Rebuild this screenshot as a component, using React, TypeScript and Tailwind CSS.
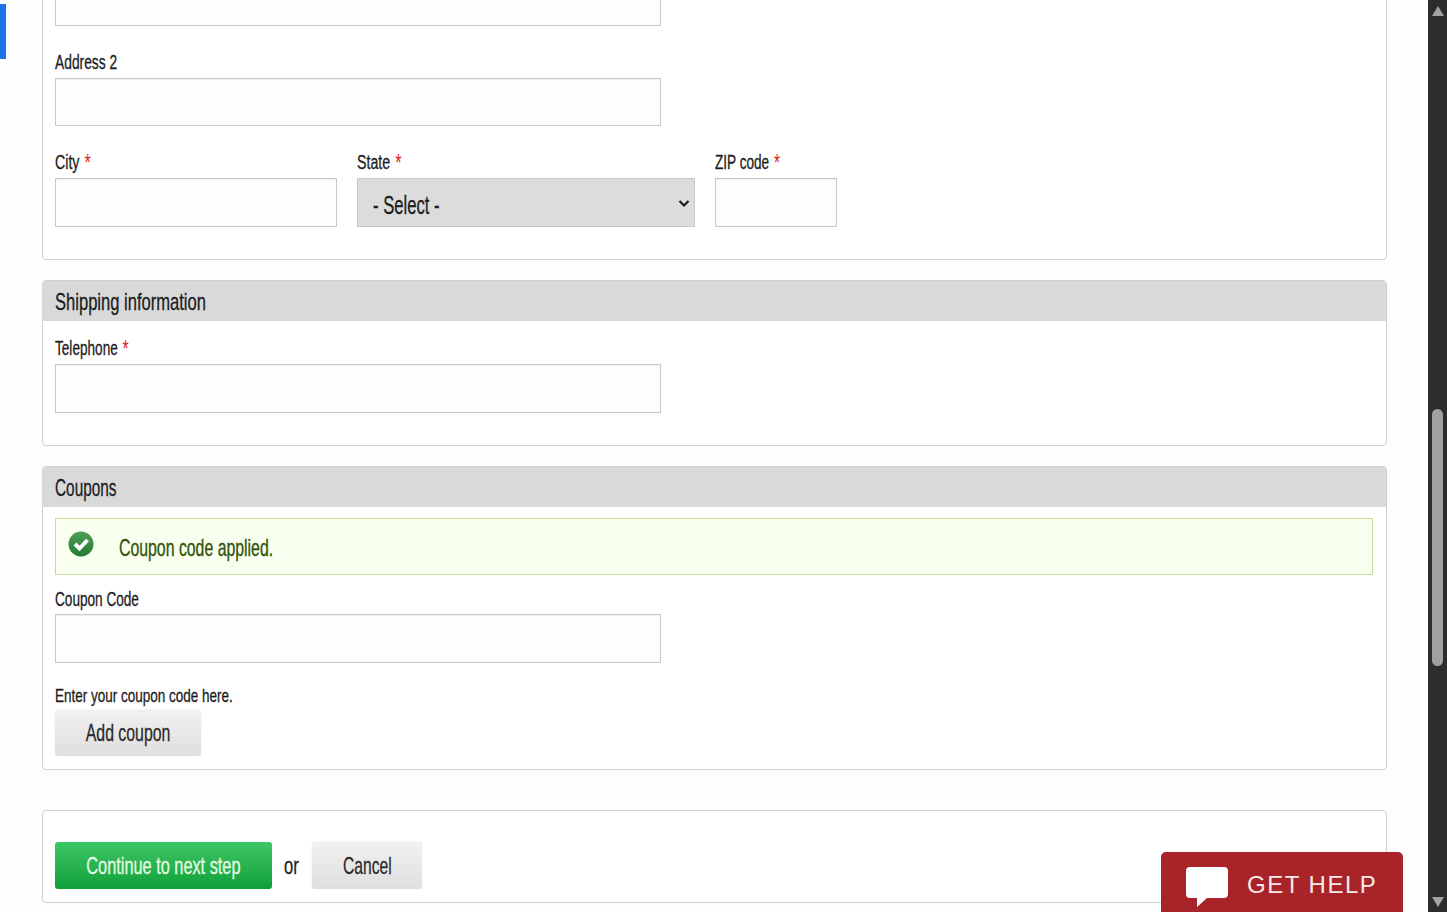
// Oswald is not available: narrow Liberation Sans sideways to get the same condensed look
const narrow = "inline-block whitespace-nowrap [-webkit-text-stroke:0.3px_currentColor]";

function Txt({ children, center, scale = "scale-x-[0.69]" }: { children: React.ReactNode; center?: boolean; scale?: string }) {
  return <span className={narrow + (center ? " origin-center " : " origin-left ") + scale}>{children}</span>;
}

function Req() {
  return <span className="ml-[7px] align-[-2px] text-[23px] leading-none text-[#e0272b] [-webkit-text-stroke:0px]">*</span>;
}

function Label({ children, required, className = "", scale }: { children: React.ReactNode; required?: boolean; className?: string; scale?: string }) {
  return (
    <label className={"block h-[24px] text-[20px] leading-[24px] text-[#1c1c1c] " + className}>
      <Txt scale={scale}>
        {children}
        {required && <Req />}
      </Txt>
    </label>
  );
}

function TextInput({ className = "" }: { className?: string }) {
  return <div className={"border border-[#c8c8c8] bg-[#fdfdfd] shadow-[inset_0_1px_1px_rgba(0,0,0,0.05)] " + className} />;
}

function Card({ title, titleScale, children, className = "" }: { title?: string; titleScale?: string; children: React.ReactNode; className?: string }) {
  return (
    <section className={"rounded-[4px] border border-[#cfcfcf] bg-white " + className}>
      {title && (
        <h2 className="-ml-[1px] h-[40px] rounded-t-[4px] bg-[#d9d9d9] pl-[13px] text-[24px] leading-[41px] text-[#1c1c1c]">
          <Txt scale={titleScale}>{title}</Txt>
        </h2>
      )}
      {children}
    </section>
  );
}

function GreyButton({ children, scale, className = "" }: { children: React.ReactNode; scale: string; className?: string }) {
  return (
    <button className={"flex items-center justify-center rounded-[3px] bg-gradient-to-b from-[#f1f1f1] to-[#dfdfdf] text-[24px] text-[#2b2b2b] shadow-[0_0_1px_rgba(0,0,0,0.25)] " + className}>
      <Txt center scale={scale}>{children}</Txt>
    </button>
  );
}

export default function App() {
  return (
    <div className="relative flex h-[912px] w-full overflow-hidden bg-white" style={{ fontFamily: '"Liberation Sans", sans-serif' }}>
      {/* blue tab on the left edge */}
      <div className="absolute left-0 top-[4px] h-[55px] w-[6px] bg-[#1a73e8]" />

      <main className="h-full w-[1428px] shrink-0 bg-[#fdfdfd] pl-[42px] pr-[41px]">
        <Card className="-mt-[20px] h-[280px] px-[12px]">
          <TextInput className="h-[45px] w-[606px]" />
          <Label className="mt-[24px]">Address 2</Label>
          <TextInput className="mt-[4px] h-[48px] w-[606px]" />
          <div className="mt-[24px] flex gap-[20px]">
            <div>
              <Label required scale="scale-x-[0.71]">City</Label>
              <TextInput className="mt-[4px] h-[49px] w-[282px]" />
            </div>
            <div>
              <Label required scale="scale-x-[0.71]">State</Label>
              <div className="relative mt-[4px] flex h-[49px] w-[338px] items-center border border-[#c8c8c8] bg-[#dcdcdc] pl-[15px] pt-[6px] text-[26px] text-[#1c1c1c]">
                <Txt scale="scale-x-[0.64]">- Select -</Txt>
                <svg className="absolute right-[3px] top-[17px]" width="14" height="14" viewBox="0 0 14 14" fill="none">
                  <path d="M2.500 5l4.500 4.500L11.500 5" stroke="#1c1c1c" strokeWidth="2.200" />
                </svg>
              </div>
            </div>
            <div>
              <Label required scale="scale-x-[0.68]">ZIP code</Label>
              <TextInput className="mt-[4px] h-[49px] w-[122px]" />
            </div>
          </div>
        </Card>

        <Card title="Shipping information" className="mt-[20px] h-[166px]">
          <div className="px-[12px]">
            <Label className="mt-[15px]" required scale="scale-x-[0.68]">Telephone</Label>
            <TextInput className="mt-[4px] h-[49px] w-[606px]" />
          </div>
        </Card>

        <Card title="Coupons" titleScale="scale-x-[0.64]" className="mt-[20px] h-[304px]">
          <div className="px-[12px]">
            <div className="mr-[1px] mt-[11px] flex h-[57px] items-start border border-[#c5dc9c] bg-[#f8ffee] pl-[12px]">
              <svg className="mt-[12px] shrink-0" width="26" height="26" viewBox="0 0 26 26">
                <defs>
                  <linearGradient id="ok" x1="0" y1="0" x2="0" y2="1">
                    <stop offset="0" stopColor="#4fa055" />
                    <stop offset="1" stopColor="#227a33" />
                  </linearGradient>
                </defs>
                <circle cx="13" cy="13" r="12.500" fill="url(#ok)" />
                <path d="M7 13l4.500 4.500L19.500 9" fill="none" stroke="#fff" strokeWidth="4" />
              </svg>
              <span className="ml-[25px] mt-[15px] text-[24px] leading-[28px] text-[#2f5206]">
                <Txt scale="scale-x-[0.66]">Coupon code applied.</Txt>
              </span>
            </div>
            <Label className="mt-[12px]" scale="scale-x-[0.68]">Coupon Code</Label>
            <TextInput className="mt-[3px] h-[49px] w-[606px]" />
            <p className="mt-[21px] h-[26px] text-[19px] leading-[24px] text-[#1c1c1c]">
              <Txt scale="scale-x-[0.71]">Enter your coupon code here.</Txt>
            </p>
            <GreyButton className="h-[46px] w-[146px]" scale="scale-x-[0.66]">Add coupon</GreyButton>
          </div>
        </Card>

        <Card className="mt-[40px] flex h-[93px] items-center px-[12px] pt-[18px]">
          <button className="flex h-[47px] w-[217px] shrink-0 items-center justify-center rounded-[3px] bg-gradient-to-b from-[#3cc765] to-[#0ca038] text-[24px] text-[#e6fbe6]">
            <Txt center scale="scale-x-[0.68]">Continue to next step</Txt>
          </button>
          <span className="ml-[12px] w-[15px] shrink-0 text-[24px] text-[#1c1c1c]">
            <Txt>or</Txt>
          </span>
          <GreyButton className="ml-[13px] h-[47px] w-[110px]" scale="scale-x-[0.65]">Cancel</GreyButton>
        </Card>
      </main>

      {/* scrollbar */}
      <div className="relative h-full w-[19px] shrink-0 bg-[#2c2c2c]">
        <div className="absolute left-[4px] top-[6px] h-0 w-0 border-x-[6px] border-b-[10px] border-x-transparent border-b-[#a3a3a3]" />
        <div className="absolute left-[4px] top-[409px] h-[257px] w-[11px] rounded-full bg-[#a0a0a0]" />
        <div className="absolute bottom-[5px] left-[4px] h-0 w-0 border-x-[6px] border-t-[10px] border-x-transparent border-t-[#a3a3a3]" />
      </div>

      {/* get help widget */}
      <div className="absolute left-[1161px] top-[852px] flex h-[60px] w-[242px] items-start rounded-t-[5px] bg-[#a92428] pl-[25px] pt-[15px]">
        <svg width="42" height="42" viewBox="0 0 42 42" fill="#fff">
          <path d="M4 0h34a4 4 0 0 1 4 4v23a4 4 0 0 1-4 4H21l-10 9v-9H4a4 4 0 0 1-4-4V4a4 4 0 0 1 4-4z" />
        </svg>
        <span className="ml-[19px] text-[24px] leading-[36px] tracking-[1.500px] text-[#f7e9e9]">GET HELP</span>
      </div>
    </div>
  );
}
